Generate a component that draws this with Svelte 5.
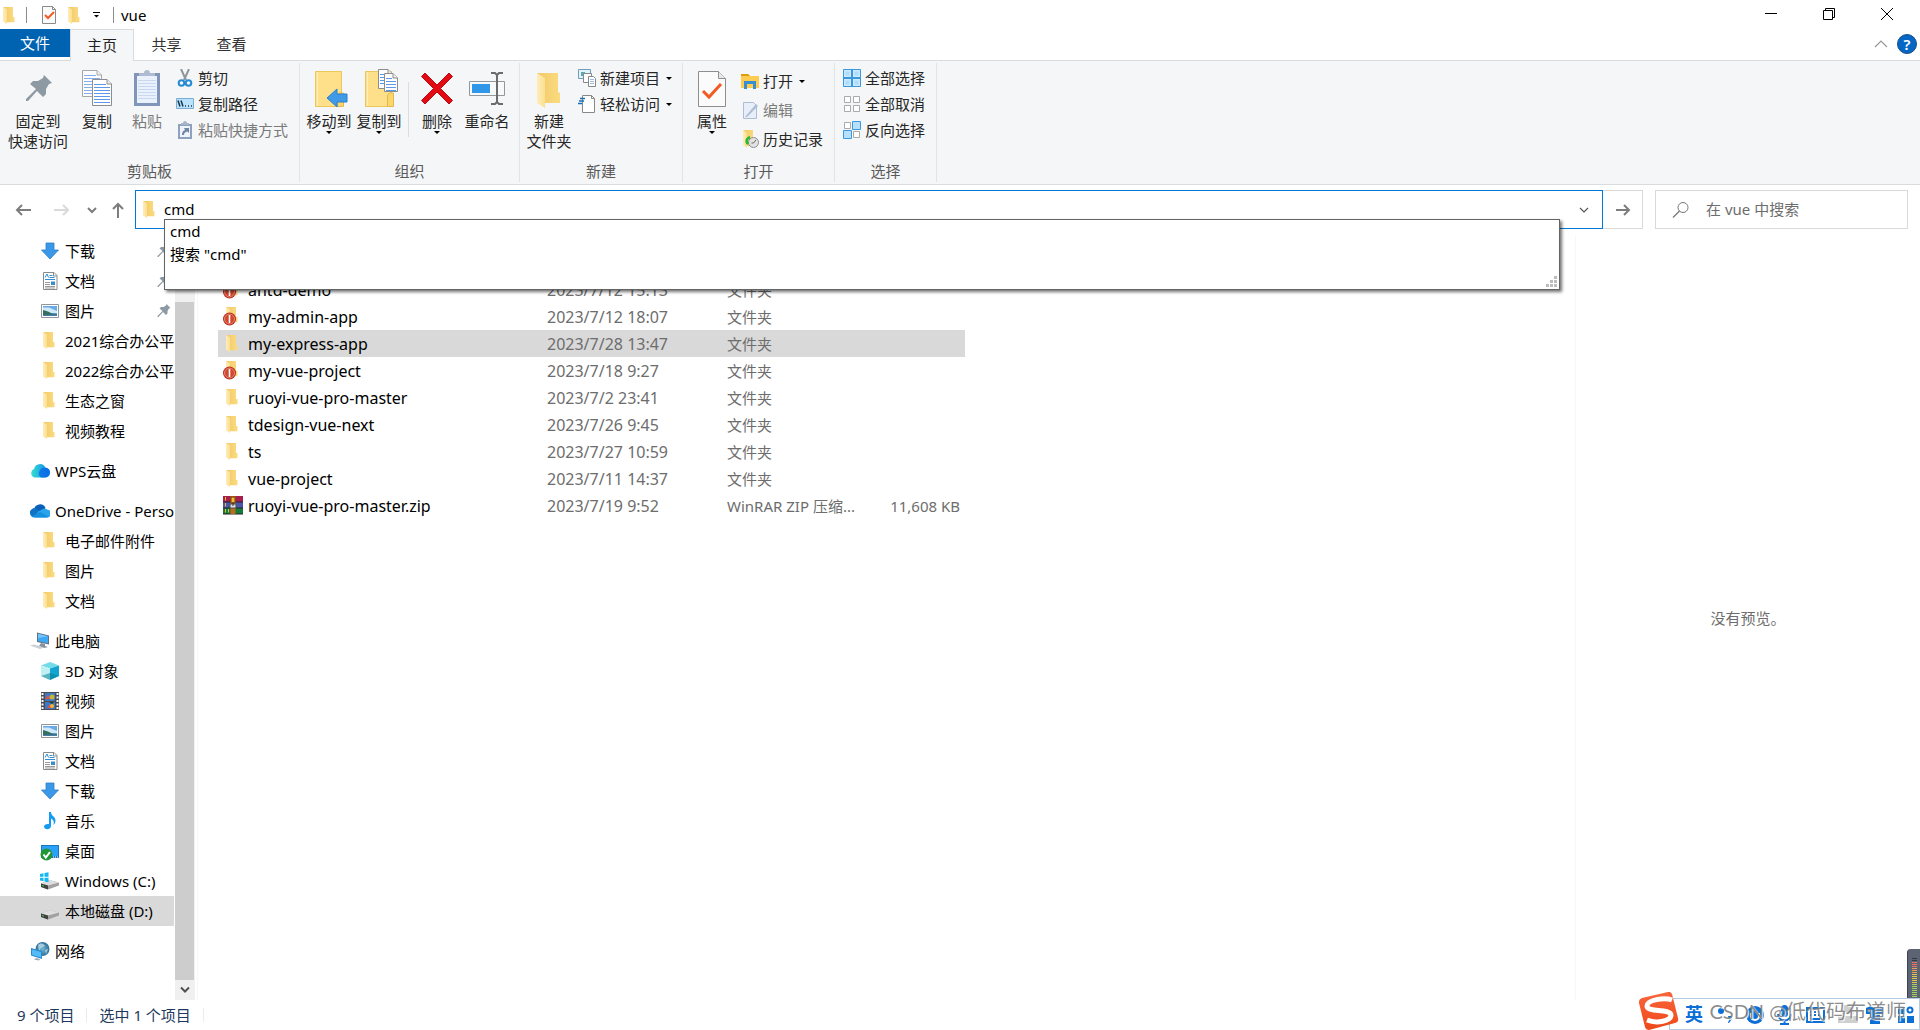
<script>
  const quickAccess = [
    { icon: 'download', label: '下载', pin: true },
    { icon: 'document', label: '文档', pin: true },
    { icon: 'picture', label: '图片', pin: true },
    { icon: 'folder', label: '2021综合办公平' },
    { icon: 'folder', label: '2022综合办公平' },
    { icon: 'folder', label: '生态之窗' },
    { icon: 'folder', label: '视频教程' }
  ];

  const roots = [
    { icon: 'wps', label: 'WPS云盘', children: [] },
    {
      icon: 'onedrive',
      label: 'OneDrive - Perso',
      children: [
        { icon: 'folder', label: '电子邮件附件' },
        { icon: 'folder', label: '图片' },
        { icon: 'folder', label: '文档' }
      ]
    },
    {
      icon: 'computer',
      label: '此电脑',
      children: [
        { icon: 'cube', label: '3D 对象' },
        { icon: 'video', label: '视频' },
        { icon: 'picture', label: '图片' },
        { icon: 'document', label: '文档' },
        { icon: 'download', label: '下载' },
        { icon: 'music', label: '音乐' },
        { icon: 'desktop', label: '桌面' },
        { icon: 'windrive', label: 'Windows (C:)' },
        { icon: 'drive', label: '本地磁盘 (D:)', selected: true }
      ]
    },
    { icon: 'network', label: '网络', children: [] }
  ];

  const files = [
    { icon: 'alert', name: 'antd-demo', date: '2023/7/12 15:13', type: '文件夹' },
    { icon: 'alert', name: 'my-admin-app', date: '2023/7/12 18:07', type: '文件夹' },
    { icon: 'folder', name: 'my-express-app', date: '2023/7/28 13:47', type: '文件夹', selected: true },
    { icon: 'alert', name: 'my-vue-project', date: '2023/7/18 9:27', type: '文件夹' },
    { icon: 'folder', name: 'ruoyi-vue-pro-master', date: '2023/7/2 23:41', type: '文件夹' },
    { icon: 'folder', name: 'tdesign-vue-next', date: '2023/7/26 9:45', type: '文件夹' },
    { icon: 'folder', name: 'ts', date: '2023/7/27 10:59', type: '文件夹' },
    { icon: 'folder', name: 'vue-project', date: '2023/7/11 14:37', type: '文件夹' },
    { icon: 'zip', name: 'ruoyi-vue-pro-master.zip', date: '2023/7/19 9:52', type: 'WinRAR ZIP 压缩...', size: '11,608 KB' }
  ];

  let address = $state('cmd');
  const meterBars = Array.from({ length: 20 }, (_, i) => i);
</script>

{#snippet folderShape()}
  <path d="M2 1h10v10l1.500 0v5.200H6z" fill="url(#folderFace)" />
  <path d="M2 1l4 2.500V18l-4-2.500z" fill="url(#folderFlap)" />
{/snippet}

{#snippet glyph(name)}
  <svg class="glyph" width="20" height="20" viewBox="0 0 20 20" aria-hidden="true">
    {#if name === 'folder'}
      <g transform="translate(1 0)">{@render folderShape()}</g>
    {:else if name === 'alert'}
      <g transform="translate(1 -1)">{@render folderShape()}</g>
      <circle cx="6.500" cy="12" r="6.500" fill="#b92a18" />
      <circle cx="6.500" cy="12" r="5" fill="#d4472f" stroke="#e58b7a" />
      <path d="M6.500 8v8" stroke="#fff" stroke-width="1.600" />
    {:else if name === 'download'}
      <path d="M6 2h8v7h4.500L10 18 1.500 9H6z" fill="#3b97e8" stroke="#2f7fc9" stroke-width=".8" />
    {:else if name === 'document'}
      <path d="M3.500 1.500h10.500l3 3v14H3.500z" fill="#fff" stroke="#8a8a8a" />
      <path d="M13.500 1.500v3.500H17" fill="none" stroke="#8a8a8a" />
      <path d="M5 6.500l2-3.500 1.500 3.500M9.500 4.500h3M9.500 6.500h5M5 8.500h10" fill="none" stroke="#2f8fd0" />
      <path d="M5 11.500h5M5 13.500h5M5 15.500h10M5 17h10" stroke="#999" />
      <path d="M11 10.500h4v3.500h-4z" fill="#3a8cc8" />
    {:else if name === 'picture'}
      <path d="M1.500 3.500h17v13h-17z" fill="#fff" stroke="#8f979d" />
      <path d="M3 5h14v10H3z" fill="#67aae5" />
      <path d="M3 6.500h6l8 3.500v2H3z" fill="#cfe8fa" />
      <path d="M3 9l5 1.500 4 2 5 .5v2H3z" fill="#356f62" />
      <path d="M3 14l14-.5V15H3z" fill="#477eab" />
    {:else if name === 'wps'}
      <path d="M4.500 16.500A4.500 4.500 0 0 1 4 8a6 6 0 0 1 11.300-1.500A5 5 0 0 1 15 16.500z" fill="url(#wpsCloud)" />
      <path d="M11 16.500a5.500 5.500 0 0 1 4.300-9.700A4.900 4.900 0 0 1 15 16.500z" fill="#0a66e6" opacity=".75" />
    {:else if name === 'onedrive'}
      <path d="M4 9a6 6 0 0 1 11.500-2L11 12z" fill="#0a5fb8" />
      <path d="M0 12.500A4.500 4.500 0 0 1 7 8l8 8H4.500A4 4 0 0 1 0 12.500z" fill="#1272c4" />
      <path d="M8 10.500l6-3a4 4 0 0 1 3 1 4 4 0 0 1-.5 8H4.500z" fill="#28a3ec" />
      <path d="M1.500 15.500L10 11l8.500 4.500a4 4 0 0 1-2 1H4.500a4 4 0 0 1-3-1z" fill="#168fdf" />
    {:else if name === 'computer'}
      <path d="M7 1.500l12 3v9L7 11z" fill="#5d7285" />
      <path d="M8 2.700l10 2.600v7L8 10z" fill="#3fa9f5" />
      <path d="M8 2.700l10 2.600L8 7z" fill="#77c5fb" />
      <path d="M11 12l4 1v2l3 1-4 1-5-2z" fill="#87919a" />
      <path d="M0 14.500l4-1 10 3-4 1.500z" fill="#c9d0d6" />
    {:else if name === 'cube'}
      <path d="M1 4.500L10 1l9 3.500-9 3z" fill="#74dbe8" />
      <path d="M1 4.500l9 3V19l-9-4z" fill="#bff1f4" />
      <path d="M19 4.500l-9 3V19l9-4z" fill="#12a5d0" />
      <path d="M1 15l9-3 9 3-9 4z" fill="#087f93" opacity=".55" />
    {:else if name === 'video'}
      <path d="M1 1h18v18H1z" fill="#4c4c4c" />
      <path d="M5 2h10v8H5zM5 11h10v7H5z" fill="#3d78c9" />
      <path d="M5 8l3-4 2 4zM7 17l3-4 4 4z" fill="#e35149" />
      <circle cx="12" cy="6" r="2.500" fill="#c7b53b" /><circle cx="12" cy="15" r="2" fill="#eab738" />
      <path d="M9 11h5l-2 2z" fill="#214126" />
      <path d="M2.500 2v17M17.500 2v17" stroke="#fff" stroke-width="2" stroke-dasharray="2 1.500" />
    {:else if name === 'music'}
      <path d="M9 1h2c0 4 4.500 4.500 4.500 8.500 0 2-1 3.500-2 4.500 1-4-.5-5.500-2.500-6.500V15c0 2-1.800 3.200-3.700 3.200S4 17 4 15.500s2-3 5-2.500z" fill="#139bf4" />
    {:else if name === 'desktop'}
      <path d="M1 4h18v13H1z" fill="#1679be" />
      <path d="M2 5h16v10H2z" fill="#2aa2fa" />
      <path d="M13 16h1m1 0h1m1 0h1" stroke="#fff" />
      <circle cx="6.500" cy="13.500" r="6" fill="#209735" />
      <path d="M3.500 13.500l2.300 3L10 11" fill="none" stroke="#fff" stroke-width="2" />
    {:else if name === 'windrive' || name === 'drive'}
      <path d="M1 12.500l8-3.500 10 2.500v3L8 18.500l-7-2.500z" fill="#a1a1a1" />
      <path d="M1 12.500L9 9l10 2.500-11 3z" fill="#dedede" />
      <path d="M1 12.500l7 2v4l-7-2.500z" fill="#3f413f" />
      <path d="M2 14.500l2 .6" stroke="#42d34e" />
      {#if name === 'windrive'}
        <path d="M0 3l3.500-.7v3.500H0zM4.500 2L8.500 1.300v4.500h-4zM0 6.800h3.500v3.400L0 9.600zM4.500 6.800h4v4.500l-4-.8z" fill="#12b7f3" />
      {/if}
    {:else if name === 'network'}
      <circle cx="12.500" cy="8" r="7" fill="url(#globe)" />
      <path d="M8 4c3-3 6-1 7 1l-4 2-2 3zM15 9l3-1-2 5z" fill="#b9dce9" opacity=".8" />
      <path d="M1 7l11 3v8L1 14.500z" fill="#288bd1" />
      <path d="M2 8.400l9 2.500v5.700L2 13.800z" fill="#55baf8" />
      <path d="M6 17l4 1-1 1.500-5-1z" fill="#9da9b2" />
    {:else if name === 'zip'}
      <path d="M0 0h20v6H0z" fill="#a81f4d" /><path d="M0 6h20v6H0z" fill="#4b55aa" /><path d="M0 12h20v6H0z" fill="#147b3b" />
      <path d="M0 6h20M0 12h20M0 18h20" stroke="#28202e" />
      <path d="M2.500 1v3.500M2.500 7v3.500M2.500 13v3.500M5.500 13v3.500" stroke="#e5bd38" />
      <path d="M7.500 0h5v18h-5z" fill="#b86d1c" />
      <path d="M8 1h4v6H8z" fill="#f2bb35" stroke="#714109" /><path d="M7 8h6v4H7z" fill="#ddd" stroke="#4c4c4c" />
      <path d="M10 6v4" stroke="#38302b" />
    {/if}
  </svg>
{/snippet}

{#snippet pinShape()}
  <path d="M19 0l8 8-3 1-3 5v5l-3 3-6-6-9 10-2 0v-2L11 14 5 9l3-3h5l5-3z" fill="#8e9aa3" />
{/snippet}

{#snippet page(x, y, w, h, n)}
  <g transform="translate({x} {y})">
    <path d="M.5 .5H{w - 5}L{w - .5} 5V{h - .5}H.5z" fill="#fff" stroke="#8d8d8d" />
    <path d="M{w - 5} .5V5H{w - .5}" fill="#eee" stroke="#8d8d8d" />
    {#each Array.from({ length: n }, (_, i) => i) as i}
      <path d="M2 {5.5 + i * 3}H{i < 1 ? w - 6 : w - 2}" stroke="#5d97e8" />
    {/each}
  </g>
{/snippet}

{#snippet bigIcon(name)}
  <svg class="big-icon" width="40" height="40" viewBox="0 0 40 40" aria-hidden="true">
    {#if name === 'pin'}
      <g transform="translate(7 7)">{@render pinShape()}</g>
    {:else if name === 'copy'}
      <g opacity=".75">{@render page(5, 2, 20, 27, 7)}</g>
      {@render page(15, 11, 20, 27, 7)}
    {:else if name === 'paste'}
      <path d="M7 5h26v33H7z" fill="#8195bb" />
      <path d="M10 8h20v27H10z" fill="#eaf1fc" />
      <path d="M12 8V5h5a3 3 0 0 1 6 0h5v3z" fill="#aebbd0" />
      <path d="M11 12.500h18m-18 3h18m-18 3h18m-18 3h18m-18 3h18m-18 3h18m-18 3h18" stroke="#c8d8ef" />
    {:else if name === 'move' || name === 'copyto'}
      <path d="M6.500 3.500h26v35h-26z" fill="#fee08a" stroke="#e9c758" />
      <path d="M8.500 4v34" stroke="#fff0bd" />
      <path d="M28.500 38.500V27l2-2h4v13.500z" fill="#fbd66e" stroke="#e2b94b" />
      {#if name === 'move'}
        <path d="M18 30l10-9v5h10v8H28v5z" fill="#3f9ae8" stroke="#2d7fc9" />
      {:else}
        {@render page(19, 1, 15, 20, 4)}
        {@render page(25, 5, 14, 19, 5)}
      {/if}
    {:else if name === 'delete'}
      <path d="M4.500 8.500L8 5l12 12L32 5l3.500 3.500-12 12 12 12L32 36 20 24 8 36l-3.500-3.500 12-12z" fill="#e30b13" stroke="#b60c12" />
    {:else if name === 'rename'}
      <path d="M2.500 13.500h35v14h-35z" fill="#f8f9fa" stroke="#92989c" />
      <path d="M5 16h18v9H5z" fill="#3096e8" />
      <path d="M24 5h4l2 2 2-2h4M24 36h4l2-2 2 2h4M30 6v29" fill="none" stroke="#6b6b6b" stroke-width="2" />
    {:else if name === 'newfolder'}
      <path d="M8 5h21v19l2 1v10H15z" fill="url(#folderFace)" />
      <path d="M8 5l8 5v30l-8-5z" fill="url(#folderFlap)" />
    {:else if name === 'props'}
      <path d="M6.500 3.500h20l7 7v28h-27z" fill="#fbfbfb" stroke="#8e8e8e" />
      <path d="M26.500 3.500v7h7" fill="#e9e9e9" stroke="#8e8e8e" />
      <path d="M11 23l6 6 12-13" fill="none" stroke="#f15a22" stroke-width="3" />
    {/if}
  </svg>
{/snippet}

{#snippet smallIcon(name)}
  <svg class="small-icon" width="18" height="18" viewBox="0 0 18 18" aria-hidden="true">
    {#if name === 'cut'}
      <path d="M5 0l5 11M13 0L8 11" stroke="#8d969c" stroke-width="2" />
      <circle cx="5.500" cy="14" r="2.800" fill="none" stroke="#258bd2" stroke-width="2" />
      <circle cx="12.500" cy="14" r="2.800" fill="none" stroke="#258bd2" stroke-width="2" />
    {:else if name === 'path'}
      <path d="M.5 3.500h17v10H.5z" fill="#b9e2fc" stroke="#7daccf" />
      <path d="M2 5.500l2 6M5 5.500l2 6M9 11h1m2 0h1m2 0h1" stroke="#16364c" stroke-width="1.500" />
    {:else if name === 'shortcut'}
      <path d="M2 3h14v15H2z" fill="#8ea1bf" /><path d="M4 5h10v11H4z" fill="#eff4fb" />
      <path d="M5 4V2h2a2 2 0 0 1 4 0h2v2z" fill="#a8b5c8" />
      <path d="M6 14c0-3 1-4 3-5L8 7h5v5l-1.500-1.500C9 11 8 12 8 14z" fill="#7085a6" />
    {:else if name === 'newitem'}
      <path d="M.5 .5h12v9H.5z" fill="#e3f3fc" stroke="#6d9ebc" /><path d="M3 3h4v4H3z" fill="#5ea8ac" />
      <path d="M5.500 4.500h8v9h-8z" fill="#fff" stroke="#888" />
      <path d="M10.500 7.500h5l2 2v8h-7z" fill="#fff" stroke="#888" /><path d="M12 10.500h4m-4 2h4m-4 2h4" stroke="#9cb9e8" />
    {:else if name === 'easy'}
      <path d="M4.500 .5h9l3 3v14h-12z" fill="#fff" stroke="#888" /><path d="M13.500 .5v3h3" fill="none" stroke="#888" />
      <path d="M2 3.500h5M1 6h5M0 8.500h4" stroke="#1670b8" stroke-width="1.500" />
    {:else if name === 'open'}
      <path d="M0 2h7l2 2h9v12H0z" fill="#ffcc52" /><path d="M0 2h7l2 2H0z" fill="#dc9c11" />
      <path d="M3 17V9h12v8h-3v-5H6v5z" fill="#368fd0" />
    {:else if name === 'edit'}
      <path d="M2.500 1.500h10l3 3v13h-13z" fill="#e8effa" stroke="#aebdd3" /><path d="M4 16L15 3l2 2L6 16z" fill="#adbdd5" />
    {:else if name === 'history'}
      <path d="M2 0h10v12h2v4H6z" fill="url(#folderFace)" /><path d="M2 0l4 3v15l-4-3z" fill="url(#folderFlap)" />
      <circle cx="12.500" cy="12.500" r="5" fill="#e2e2e2" stroke="#8c8c8c" />
      <path d="M12.500 13l2.500-3m-2.500 3h-2" fill="none" stroke="#666" />
      <path d="M9 6c-5 1-6 6-3 9l2-2c-2-2-1-4 1-4z" fill="#29b935" />
    {:else if name === 'all'}
      <path d="M.5 .5h17v17H.5z" fill="#cde9ff" stroke="#3998de" /><path d="M9 0v18M0 9h18" stroke="#3998de" stroke-width="2" />
      <path d="M2.500 2.500h4v4h-4zM11.500 2.500h4v4h-4zM2.500 11.500h4v4h-4zM11.500 11.500h4v4h-4z" fill="#addcff" />
    {:else if name === 'none'}
      <path d="M1.500 1.500h6v6h-6zM10.500 1.500h6v6h-6zM1.500 10.500h6v6h-6zM10.500 10.500h6v6h-6z" fill="#fff" stroke="#aaa" />
    {:else if name === 'invert'}
      <path d="M1.500 1.500h6v6h-6zM10.500 10.500h6v6h-6z" fill="#fff" stroke="#aaa" />
      <path d="M9.500 .5h8v8h-8zM.5 9.500h8v8h-8z" fill="#b7e0ff" stroke="#3998de" />
    {/if}
  </svg>
{/snippet}

{#snippet caret()}
  <svg class="caret" width="6" height="3" viewBox="0 0 6 3" aria-hidden="true"><path d="M0 0h6L3 3z" /></svg>
{/snippet}

{#snippet bigButton(icon, lines, arrow = false, disabled = false)}
  <button class="big" {disabled}>
    {@render bigIcon(icon)}
    {#each lines as line}<span>{line}</span>{/each}
    {#if arrow}{@render caret()}{/if}
  </button>
{/snippet}

{#snippet smallButton(icon, label, arrow = false, disabled = false)}
  <button class="small" {disabled}>
    {@render smallIcon(icon)}
    <span>{label}</span>
    {#if arrow}{@render caret()}{/if}
  </button>
{/snippet}

{#snippet leaf(item)}
  <li>
    <button class="node" class:selected={item.selected}>
      {@render glyph(item.icon)}
      <span>{item.label}</span>
      {#if item.pin}
        <svg class="pin" width="14" height="14" viewBox="0 0 28 28" aria-hidden="true">{@render pinShape()}</svg>
      {/if}
    </button>
  </li>
{/snippet}

<svg class="defs" width="0" height="0" aria-hidden="true">
  <defs>
    <linearGradient id="folderFace"><stop offset="0" stop-color="#f0c968" /><stop offset="1" stop-color="#fbdb80" /></linearGradient>
    <linearGradient id="folderFlap"><stop offset="0" stop-color="#ffedb8" /><stop offset="1" stop-color="#fbdf92" /></linearGradient>
    <linearGradient id="wpsCloud"><stop offset="0" stop-color="#35e0cf" /><stop offset="1" stop-color="#0b7cf5" /></linearGradient>
    <radialGradient id="globe"><stop offset="0" stop-color="#72b6d4" /><stop offset="1" stop-color="#2f6f98" /></radialGradient>
    <linearGradient id="sogou" x2="0" y2="1"><stop offset="0" stop-color="#f9653a" /><stop offset="1" stop-color="#ee4a1b" /></linearGradient>
  </defs>
</svg>

<div class="window">
  <header class="titlebar">
    <svg width="14" height="18" viewBox="2 0 14 18" aria-hidden="true">{@render folderShape()}</svg>
    <i class="bar"></i>
    <button class="quick" aria-label="属性">
      <svg width="16" height="18" viewBox="0 0 16 18" aria-hidden="true">
        <path d="M1.500 .5h10l3 3v14h-13z" fill="#fafafa" stroke="#8a8a8a" /><path d="M11.500 .5v3h3" fill="none" stroke="#8a8a8a" />
        <path d="M4 9l3 3 6-6" fill="none" stroke="#f15a22" stroke-width="2" />
      </svg>
    </button>
    <button class="quick" aria-label="新建文件夹">
      <svg width="14" height="18" viewBox="2 0 14 18" aria-hidden="true">{@render folderShape()}</svg>
    </button>
    <button class="quick more" aria-label="自定义快速访问工具栏">
      <svg width="8" height="8" viewBox="0 0 8 8" aria-hidden="true"><path d="M0 1h7v1H0zM1 4h5L3.500 6.500z" /></svg>
    </button>
    <i class="bar"></i>
    <h1>vue</h1>
    <div class="controls">
      <button aria-label="最小化"><svg width="14" height="14" viewBox="0 0 14 14"><path d="M1 6.500h12" /></svg></button>
      <button aria-label="还原"><svg width="14" height="14" viewBox="0 0 14 14"><path d="M1.500 3.500h9v9h-9zM3.500 3V1.500h9v9H11" /></svg></button>
      <button aria-label="关闭"><svg width="14" height="14" viewBox="0 0 14 14"><path d="M1 1l12 12M13 1L1 13" /></svg></button>
    </div>
  </header>

  <nav class="tabs" aria-label="功能区">
    <button class="tab file">文件</button>
    <button class="tab active">主页</button>
    <button class="tab">共享</button>
    <button class="tab">查看</button>
    <div class="tab-tools">
      <button aria-label="折叠功能区">
        <svg width="14" height="8" viewBox="0 0 14 8"><path d="M1 7l6-6 6 6" fill="none" stroke="#999" stroke-width="1.200" /></svg>
      </button>
      <button class="help" aria-label="帮助">?</button>
    </div>
  </nav>

  <section class="ribbon">
    <div class="group clipboard">
      <div class="tools">
        {@render bigButton('pin', ['固定到', '快速访问'])}
        {@render bigButton('copy', ['复制'])}
        {@render bigButton('paste', ['粘贴'], false, true)}
        <div class="stack">
          {@render smallButton('cut', '剪切')}
          {@render smallButton('path', '复制路径')}
          {@render smallButton('shortcut', '粘贴快捷方式', false, true)}
        </div>
      </div>
      <h2>剪贴板</h2>
    </div>
    <div class="group organize">
      <div class="tools">
        {@render bigButton('move', ['移动到'], true)}
        {@render bigButton('copyto', ['复制到'], true)}
        <i class="divider"></i>
        {@render bigButton('delete', ['删除'], true)}
        {@render bigButton('rename', ['重命名'])}
      </div>
      <h2>组织</h2>
    </div>
    <div class="group create">
      <div class="tools">
        {@render bigButton('newfolder', ['新建', '文件夹'])}
        <div class="stack">
          {@render smallButton('newitem', '新建项目', true)}
          {@render smallButton('easy', '轻松访问', true)}
        </div>
      </div>
      <h2>新建</h2>
    </div>
    <div class="group open">
      <div class="tools">
        {@render bigButton('props', ['属性'], true)}
        <div class="stack loose">
          {@render smallButton('open', '打开', true)}
          {@render smallButton('edit', '编辑', false, true)}
          {@render smallButton('history', '历史记录')}
        </div>
      </div>
      <h2>打开</h2>
    </div>
    <div class="group select">
      <div class="tools">
        <div class="stack">
          {@render smallButton('all', '全部选择')}
          {@render smallButton('none', '全部取消')}
          {@render smallButton('invert', '反向选择')}
        </div>
      </div>
      <h2>选择</h2>
    </div>
  </section>

  <div class="navigation">
    <div class="arrows">
      <button class="back" aria-label="后退"><svg width="16" height="14" viewBox="0 0 16 14"><path d="M16 7H2M7 2L2 7l5 5" /></svg></button>
      <button class="forward" aria-label="前进" disabled><svg width="16" height="14" viewBox="0 0 16 14"><path d="M0 7h14M9 2l5 5-5 5" /></svg></button>
      <button class="recent" aria-label="最近浏览的位置"><svg width="10" height="8" viewBox="0 0 10 8"><path d="M1 2l4 4 4-4" /></svg></button>
      <button class="up" aria-label="上移"><svg width="14" height="16" viewBox="0 0 14 16"><path d="M7 16V2M2 7l5-5 5 5" /></svg></button>
    </div>
    <div class="address">
      {@render glyph('folder')}
      <input aria-label="地址" bind:value={address} />
      <button aria-label="以前的位置"><svg width="12" height="8" viewBox="0 0 12 8"><path d="M2 2l4 4 4-4" fill="none" stroke="#555" stroke-width="1.200" /></svg></button>
      <ul class="suggestions">
        <li>cmd</li>
        <li>搜索 "cmd"</li>
        <svg class="grip" width="12" height="12" viewBox="0 0 12 12" aria-hidden="true"><path d="M8 0h3v3H8zM4 4h3v3H4zM8 4h3v3H8zM0 8h3v3H0zM4 8h3v3H4zM8 8h3v3H8z" fill="#bdbdbd" /></svg>
      </ul>
    </div>
    <button class="go" aria-label="转到"><svg width="16" height="14" viewBox="0 0 16 14"><path d="M1 7h13M9 2l5 5-5 5" /></svg></button>
    <div class="search">
      <svg width="18" height="18" viewBox="0 0 18 18" aria-hidden="true"><circle cx="11" cy="6.500" r="5" fill="none" stroke="#777" /><path d="M7.500 10L1 16.500" stroke="#777" stroke-width="1.200" /></svg>
      <input aria-label="搜索" placeholder="在 vue 中搜索" />
    </div>
  </div>

  <div class="body">
    <nav class="tree" aria-label="导航窗格">
      <ul class="branch">
        {#each quickAccess as item}{@render leaf(item)}{/each}
      </ul>
      {#each roots as root}
        <button class="node root">{@render glyph(root.icon)}<span>{root.label}</span></button>
        <ul class="branch">
          {#each root.children as item}{@render leaf(item)}{/each}
        </ul>
      {/each}
    </nav>
    <div class="scrollbar">
      <div class="thumb"></div>
      <button aria-label="向下滚动"><svg width="10" height="8" viewBox="0 0 10 8"><path d="M1 1.500l4 4 4-4" fill="none" stroke="#505050" stroke-width="2" /></svg></button>
    </div>
    <main class="files">
      <table>
        <colgroup><col class="c-name" /><col class="c-date" /><col class="c-type" /><col class="c-size" /></colgroup>
        <tbody>
          {#each files as file}
            <tr class:selected={file.selected}>
              <td><div class="name">{@render glyph(file.icon)}<span>{file.name}</span></div></td>
              <td class="dim date">{file.date}</td>
              <td class="dim">{file.type}</td>
              <td class="dim size">{file.size ?? ''}</td>
            </tr>
          {/each}
        </tbody>
      </table>
    </main>
    <aside class="preview">没有预览。</aside>
  </div>

  <footer class="status">
    <span>9 个项目</span>
    <span>选中 1 个项目</span>
  </footer>

  <div class="meter">
    {#each meterBars as bar}
      <i class:red={bar > 1 && bar < 5} class:orange={bar >= 5 && bar < 8} class:yellow={bar >= 8 && bar < 13} class:green={bar >= 13}></i>
    {/each}
  </div>

  <div class="ime">
    <svg class="logo" width="40" height="38" viewBox="0 0 40 38" aria-hidden="true">
      <path d="M3 6L29 0q3-.5 4 2l6 24q1 4-3 5L10 38q-3 0-4-3L0 11q-.5-4 3-5z" fill="url(#sogou)" />
      <path d="M33 8C25 5 8 8 8 14c0 7 23 2 24 9 0 6-14 9-24 5" fill="none" stroke="#fff" stroke-width="5" />
    </svg>
    <button class="lang">英</button>
    <svg class="ime-icons" width="198" height="24" viewBox="0 0 198 24" aria-hidden="true">
      <circle cx="5" cy="9" r="3" /><path d="M12 14h4v3l-3 4h-1l1-3z" />
      <circle cx="39" cy="13" r="9" /><path d="M35 11v3a4 4 0 0 0 8 0v-3" fill="none" stroke="#fff" stroke-width="2" />
      <rect x="65" y="3" width="7" height="12" rx="3.500" /><path d="M62 12a6.500 6.500 0 0 0 13 0M68.500 18v4M64 22h9" fill="none" stroke="#0b6fd6" stroke-width="2" />
      <path d="M91 6h17v14H91zM94 10h2m2 0h2m2 0h2M94 13h2m2 0h2m2 0h2M95 17h9" fill="none" stroke="#0b6fd6" stroke-width="2" />
      <path d="M126 3h12v9h-12zM122 14h20v7h-20z" class="pale" />
      <path d="M150 6l5-2q4 4 8 0l5 2v6h-4v10h-10V12h-4z" />
      <path d="M182 5h7v7h-7zM182 14h7v7h-7zM191 14h7v7h-7z" /><circle cx="194" cy="8" r="2.500" fill="none" stroke="#0b6fd6" stroke-width="2" />
    </svg>
  </div>
  <div class="watermark">CSDN @低代码布道师</div>
</div>

<style>
  :global(body) {
    margin: 0;
    background: #fff;
    color: #000;
    font: 15px/20px "Noto Sans", "Noto Sans CJK SC", sans-serif;
  }
  .defs { position: absolute; }
  svg { display: block; flex: none; }
  button, input { font: inherit; color: inherit; border: 0; padding: 0; margin: 0; background: none; }
  input { outline: 0; min-width: 0; }
  ul { list-style: none; margin: 0; padding: 0; }
  h1, h2 { margin: 0; font: inherit; }
  .window { position: relative; display: flex; flex-direction: column; min-height: 100vh; overflow: hidden; }

  .titlebar { display: flex; align-items: center; height: 29px; padding-left: 3px; }
  .titlebar .bar { width: 1px; height: 16px; background: #8c8c8c; margin: 0 7px 0 9px; }
  .quick { margin-left: 7px; }
  .quick + .quick { margin-left: 11px; }
  .quick.more { margin-right: 3px; }
  .controls { display: flex; align-self: stretch; margin-left: auto; padding-right: 4px; }
  .controls button { display: grid; place-items: center; width: 58px; padding-bottom: 1px; }
  .controls path { fill: none; stroke: #000; }

  .tabs { display: flex; height: 31px; border-bottom: 1px solid #dadbdc; }
  .tab { width: 65px; height: 31px; padding-bottom: 2px; color: #333; }
  .tab.file { width: 70px; height: 28px; padding: 0; background: #0063b1; color: #fff; }
  .tab.active { box-sizing: border-box; width: 64px; height: 32px; background: #f5f6f7; border: 1px solid #dadbdc; border-bottom: 0; color: #222; }
  .tab-tools { display: flex; align-items: center; gap: 9px; margin-left: auto; padding: 0 3px 1px 0; }
  .help { width: 20px; height: 20px; border-radius: 50%; border: 1px solid #1c4f83; background: #0566c6; color: #fff; font-weight: 600; line-height: 18px; }

  .ribbon { display: flex; height: 123px; background: #f5f6f7; border-bottom: 1px solid #dadbdc; }
  .group { display: flex; flex-direction: column; justify-content: space-between; box-sizing: border-box; margin: 2px 0; padding-bottom: 1px; border-right: 1px solid #e2e3e4; }
  .group h2 { text-align: center; color: #5a5a5a; }
  .clipboard { width: 300px; }
  .organize { width: 220px; }
  .create { width: 163px; }
  .open { width: 152px; }
  .select { width: 102px; }
  .tools { display: flex; padding: 5px 0 0 4px; }
  .select .tools { padding-left: 4px; }
  .big { display: flex; flex-direction: column; align-items: center; width: 50px; color: #262626; white-space: nowrap; }
  .big-icon { margin-bottom: 3px; }
  .clipboard .big:first-child { width: 68px; }
  .big:disabled, .small:disabled { color: #7a7a7a; }
  .divider { width: 1px; height: 55px; margin: 14px 3px 0 4px; background: #dcdddf; }
  .stack { display: flex; flex-direction: column; gap: 6px; padding-left: 4px; }
  .stack.loose { gap: 9px; padding-top: 3px; }
  .small { display: flex; align-items: center; gap: 4px; height: 20px; color: #262626; white-space: nowrap; }
  .small .caret { margin-left: 2px; }

  .navigation { display: flex; height: 39px; padding: 5px 12px 7px 0; }
  .arrows { display: flex; width: 135px; }
  .arrows button { display: grid; place-items: center; }
  .arrows path, .go path { fill: none; stroke: #7d7d7d; stroke-width: 2; }
  .arrows .forward path { stroke: #dadada; }
  .arrows .back { width: 46px; }
  .arrows .forward { width: 32px; }
  .arrows .recent { width: 28px; }
  .arrows .up { width: 24px; }
  .address { position: relative; z-index: 2; display: flex; flex: 1; align-items: center; border: 1px solid #0078d7; padding-left: 4px; }
  .address input, .search input { padding-bottom: 2px; }
  .address input { flex: 1; padding-left: 4px; }
  .address button { display: grid; place-items: center; width: 37px; height: 37px; }
  .suggestions { position: absolute; left: 28px; right: 42px; top: 28px; height: 69px; background: #fff; border: 1px solid #646464; box-shadow: 2px 2px 3px rgba(0, 0, 0, .55); }
  .suggestions li { padding-left: 5px; line-height: 23px; }
  .grip { position: absolute; right: 1px; bottom: 1px; }
  .go { display: grid; place-items: center; width: 40px; border: 1px solid #d9d9d9; border-left: 0; }
  .search { display: flex; align-items: center; box-sizing: border-box; width: 253px; margin-left: 12px; padding-left: 16px; border: 1px solid #d9d9d9; }
  .search input { flex: 1; padding-left: 16px; }
  .search input::placeholder { color: #6d6d6d; opacity: 1; }

  .body { display: flex; flex: 1; }
  .tree { width: 174px; overflow: hidden; }
  .node { position: relative; display: flex; align-items: center; gap: 5px; width: 174px; height: 30px; padding-left: 40px; overflow: hidden; white-space: nowrap; text-align: left; }
  .node.root { margin-top: 10px; padding-left: 30px; }
  .selected { background: #d9d9d9; }
  .node .pin { position: absolute; right: 3px; top: 8px; }
  .scrollbar { display: flex; flex-direction: column; width: 20px; margin-left: 1px; padding-top: 66px; background: #f0f0f0; }
  .thumb { flex: 1; width: 19px; background: #cdcdcd; }
  .scrollbar button { display: grid; place-items: center; height: 20px; }
  .files { flex: 1; min-width: 0; margin-left: 2px; border-left: 1px solid #f7f7f7; padding: 40px 0 0 20px; }
  table { width: 747px; table-layout: fixed; border-collapse: collapse; }
  .c-name { width: 329px; }
  .c-date { width: 180px; }
  .c-type { width: 140px; }
  td { height: 27px; padding: 0; white-space: nowrap; }
  .name { display: flex; align-items: center; gap: 5px; padding-left: 5px; font-size: 16px; }
  .dim { color: #6d6d6d; }
  .date { font-size: 16px; }
  .size { text-align: right; padding-right: 5px; }
  .preview { display: grid; place-items: center; width: 344px; border-left: 1px solid #f7f7f7; color: #6d6d6d; }

  .status { display: flex; align-items: center; height: 30px; padding-left: 17px; color: #1e395b; }
  .status span { padding-right: 12px; margin-right: 12px; border-right: 1px solid #ececec; line-height: 14px; }

  .meter { position: absolute; right: 0; bottom: 32px; display: flex; flex-direction: column; gap: 1px; box-sizing: border-box; width: 13px; height: 49px; padding: 9px 3px 0 4px; border-left: 1px solid #3d4250; border-radius: 4px 0 0 0; background: #5c6373; overflow: hidden; }
  .meter i { flex: none; height: 1px; background: #343944; }
  .meter .red { background: #f0705c; }
  .meter .orange { background: #eba05a; }
  .meter .yellow { background: #dfc84e; }
  .meter .green { background: #a4d65c; }
  .ime { position: absolute; right: 0; bottom: 0; display: flex; align-items: center; box-sizing: border-box; width: 281px; height: 32px; }
  .ime::before { content: ""; position: absolute; inset: 0 0 0 30px; border: 1px solid #b4cbe3; background: #fff; }
  .logo { position: relative; margin-bottom: 6px; }
  .lang { position: relative; width: 18px; margin: 0 13px 0 6px; color: #0b6fd6; font-size: 18px; font-weight: 700; }
  .ime-icons { position: relative; fill: #0b6fd6; }
  .ime-icons .pale { fill: #cfcfcf; }
  .watermark { position: absolute; right: 14px; bottom: 7px; font-family: Lato, "Noto Sans CJK SC", sans-serif; font-size: 20px; line-height: 24px; color: rgba(120, 120, 120, .85); text-shadow: 1px 1px 1px #fff; white-space: nowrap; }
</style>
